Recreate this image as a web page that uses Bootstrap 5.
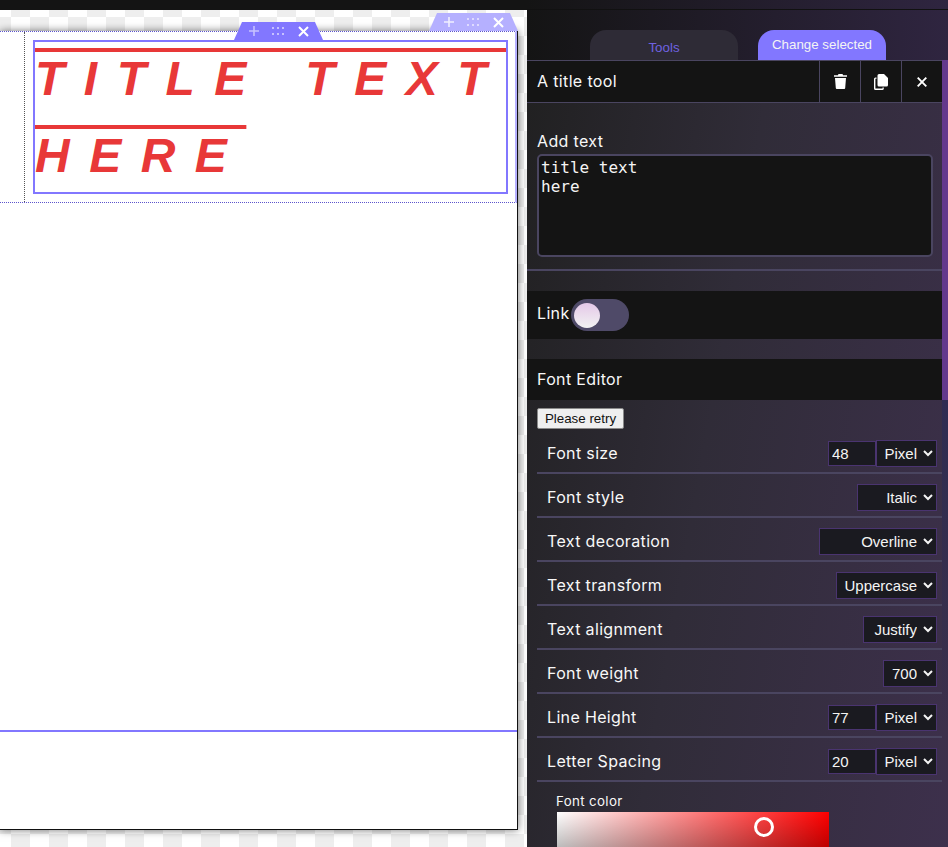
<!DOCTYPE html>
<html lang="en">
<head>
  <meta charset="UTF-8" />
  <meta name="viewport" content="width=device-width, initial-scale=1.0"/>
  <title>Page editor</title>
  <link href="https://cdn.jsdelivr.net/npm/bootstrap@5.3.3/dist/css/bootstrap.min.css" rel="stylesheet">
  <style>
    html, body { height: 847px; overflow: hidden; }
    body { background: #141414; font-family: "Inter", "Liberation Sans", sans-serif; font-weight: 400; color: #f8f8f8; letter-spacing: .35px; }
    .canvas-col {
      flex: 0 0 527px; height: 837px; margin-top: 10px; position: relative;
      background-color: #fff;
      background-image: conic-gradient(#eee 25%, #fff 0 50%, #eee 0 75%, #fff 0);
      background-size: 38px 38px;
      background-position: -8px -12px;
    }
    .page-sheet {
      width: 518px; height: 799px; margin-top: 21px; background: #fff;
      border-right: 1px solid #111; border-bottom: 1px solid #111; box-shadow: 0 0 8px rgba(0,0,0,.55);
    }
    .sel-section { height: 172px; border: 1px dotted #5d55cc; border-left: 0; border-right: 2px solid #b5b0ff; }
    .guide-col { flex: 0 0 25px; border-right: 1px dotted #555; }
    .title-box { margin: 8px 7px 0 8px; height: 154px; padding: 0 2px; box-shadow: inset 0 0 0 2px #8277ff; }
    .title-text {
      margin: 0; font: italic 700 48px/77px "Liberation Sans", sans-serif; color: #e83838;
      letter-spacing: 19.5px; text-transform: uppercase; text-decoration: overline; text-align: justify;
    }
    .drop-line { height: 2px; background: #8277ff; margin-top: 527px; }
    .handle {
      position: absolute; height: 18px; width: 89px; background: #8277ff; color: #fff; gap: 13px;
      clip-path: polygon(8px 0, calc(100% - 8px) 0, 100% 100%, 0 100%);
    }
    .handle-front { left: 234px; top: 12px; }
    .handle-back { left: 429px; top: 3px; background: #b5b0ff; }
    .panel-col {
      flex: 0 0 421px; height: 847px;
      background: linear-gradient(100deg, #202020 0%, #302c38 45%, #3d304c 100%);
    }
    .top-zone { background: linear-gradient(90deg, #141414, #2f2540); }
    .top-line { height: 10px; border-bottom: 1px solid #111; }
    .tab-row { height: 50px; padding: 20px 0 0 63px; gap: 20px; }
    .tab-item { height: 30px; border-radius: 16px 16px 0 0; font: 13.33px/1 "Liberation Sans", sans-serif; letter-spacing: 0; }
    .tab-off { width: 148px; background: #2e2b36; color: #6e62e0; padding-top: 11px; }
    .tab-on { width: 128px; background: #8277ff; color: #f4f4f4; padding-top: 8px; }
    .scroll-thumb { height: 340px; background: #63388c; }
    .scroll-rest { flex: 1 1 auto; background: linear-gradient(#2f2c52, rgba(47,44,82,0) 60%); }
    .scroll-rail { flex: 0 0 6px; }
    .main-col { width: 415px; flex: 0 0 415px; }
    .head-bar { height: 43px; background: #141414; border-top: 1px solid #4a4560; border-bottom: 1px solid #4a4560; padding-left: 10px; }
    .head-btn { width: 41px; height: 41px; border-left: 1px solid #4a4560; }
    .head-title { font-size: 16px; padding-bottom: 2px; }
    .add-label { margin-top: 27px; height: 22px; padding-left: 10px; font-size: 16px; line-height: 22px; }
    .text-entry {
      display: block; width: 396px; height: 103px; margin: 2px 0 0 10px; resize: none; padding: 2px;
      background: #141414; color: #f4f4f4; border: 2px solid #4a4560; border-radius: 5px;
      font: 16px/19px "DejaVu Sans Mono", monospace; letter-spacing: 0; outline: 0;
    }
    .rule-thick { height: 2px; background: #4a4560; margin-top: 12px; }
    .dark-band { background: #141414; padding-left: 10px; font-size: 16px; }
    .link-band { height: 48px; margin-top: 20px; }
    .link-band span { padding-bottom: 4px; }
    .font-band { height: 41px; margin-top: 20px; padding-bottom: 2px; }
    .toggle-track { width: 58px; height: 32px; border-radius: 16px; background: #4f4a68; padding-left: 3px; margin-left: 1px; }
    .toggle-knob { width: 26px; height: 25px; border-radius: 50%; background: linear-gradient(#e4c8e8, #f2f2f2); }
    .retry-btn {
      display: block; margin: 8px 0 1px 10px; width: 87px; height: 21px; padding: 0; background: #efefef; color: #111;
      border: 1px solid #8a8a8a; border-radius: 2px; font: 13.33px "Liberation Sans", sans-serif; letter-spacing: 0;
    }
    .prop-row { height: 44px; margin-left: 10px; padding: 4px 5px 0 10px; border-bottom: 2px solid #4a4560; font-size: 16px; }
    .num-box, .unit-box {
      background: #1a1a20; color: #f4f4f4; border: 1px solid #4a3470; font: 15px "Liberation Sans", sans-serif; letter-spacing: 0; outline: 0; border-radius: 0;
    }
    .num-box { width: 48px; height: 25px; padding: 0 3px; }
    .unit-box { height: 27px; text-align: right; color-scheme: dark; padding-right: 3px; }
    .unit-pixel { width: 61px; }
    .unit-italic { width: 80px; }
    .unit-overline { width: 118px; }
    .unit-upper { width: 101px; }
    .unit-justify { width: 74px; }
    .unit-weight { width: 54px; }
    .color-label { font-size: 13.33px; margin: 11px 0 0 29px; line-height: 16px; }
    .color-field {
      width: 272px; height: 136px; margin: 3px 0 0 30px; position: relative;
      background: linear-gradient(to top, #000, transparent), linear-gradient(to right, #fff, #f00);
    }
    .color-dot { position: absolute; left: 197px; top: 5px; width: 20px; height: 20px; border: 3px solid #fff; border-radius: 50%; }
  </style>
</head>
<body class="d-flex">
  <div class="canvas-col">
    <div class="page-sheet">
      <div class="sel-section d-flex">
        <div class="guide-col"></div>
        <div class="title-box flex-grow-1">
          <h1 class="title-text">title text here</h1>
        </div>
      </div>
      <div class="drop-line"></div>
    </div>
    <div class="handle handle-back d-flex align-items-center justify-content-center">
      <svg width="10" height="10" viewBox="0 0 10 10" stroke="#fff" stroke-opacity=".8" stroke-width="1.6"><path d="M5 0v10M0 5h10"/></svg>
      <svg width="13" height="9" viewBox="0 0 13 9" fill="#fff" opacity=".55"><path d="M0 0h2v2H0zM5 0h2v2H5zM10 0h2v2h-2zM0 6h2v2H0zM5 6h2v2H5zM10 6h2v2h-2z"/></svg>
      <svg width="11" height="11" viewBox="0 0 11 11" stroke="#fff" stroke-width="2"><path d="M1 1l9 9M10 1l-9 9"/></svg>
    </div>
    <div class="handle handle-front d-flex align-items-center justify-content-center">
      <svg width="10" height="10" viewBox="0 0 10 10" stroke="#fff" stroke-opacity=".55" stroke-width="1.6"><path d="M5 0v10M0 5h10"/></svg>
      <svg width="13" height="9" viewBox="0 0 13 9" fill="#fff" opacity=".55"><path d="M0 0h2v2H0zM5 0h2v2H5zM10 0h2v2h-2zM0 6h2v2H0zM5 6h2v2H5zM10 6h2v2h-2z"/></svg>
      <svg width="11" height="11" viewBox="0 0 11 11" stroke="#fff" stroke-width="2"><path d="M1 1l9 9M10 1l-9 9"/></svg>
    </div>
  </div>

  <div class="panel-col overflow-hidden">
    <div class="top-zone">
      <div class="top-line"></div>
      <div class="tab-row d-flex text-center">
        <div class="tab-item tab-off">Tools</div>
        <div class="tab-item tab-on">Change selected</div>
      </div>
    </div>
    <div class="d-flex">
      <div class="main-col">
        <div class="head-bar d-flex align-items-center">
          <div class="head-title flex-grow-1">A title tool</div>
          <div class="head-btn d-flex align-items-center justify-content-center">
            <svg width="13" height="15" viewBox="0 0 13 15" fill="#fff"><path d="M4.500 0h4l.6 1.200H13v1.600H0V1.200h3.900zM1 4h11l-.8 10a1 1 0 0 1-1 1H2.800a1 1 0 0 1-1-1z"/></svg>
          </div>
          <div class="head-btn d-flex align-items-center justify-content-center">
            <svg width="14" height="16" viewBox="0 0 14 16" fill="#fff"><path d="M5 0h5l4 4v7a1.500 1.500 0 0 1-1.500 1.500H5A1.500 1.500 0 0 1 3.500 11V1.500A1.500 1.500 0 0 1 5 0z"/><path d="M2.500 3.500v1.300H1.400v9.800h7.100v-1h1.300v.9A1.500 1.500 0 0 1 8.300 16H1.500A1.500 1.500 0 0 1 0 14.500V5a1.500 1.500 0 0 1 1.500-1.500z"/></svg>
          </div>
          <div class="head-btn d-flex align-items-center justify-content-center">
            <svg width="10" height="10" viewBox="0 0 10 10" stroke="#fff" stroke-width="1.900"><path d="M.7.7l8.600 8.600M9.300.7L.7 9.300"/></svg>
          </div>
        </div>

        <div class="add-label">Add text</div>
        <textarea class="text-entry" spellcheck="false">title text
here</textarea>
        <div class="rule-thick"></div>

        <div class="dark-band link-band d-flex align-items-center">
          <span>Link</span>
          <div class="toggle-track d-flex align-items-center"><div class="toggle-knob"></div></div>
        </div>

        <div class="dark-band font-band d-flex align-items-center">Font Editor</div>
        <button class="retry-btn" type="button">Please retry</button>

        <div class="prop-row d-flex align-items-center">
          <span class="flex-grow-1">Font size</span>
          <input class="num-box" value="48">
          <select class="unit-box unit-pixel"><option>Pixel</option></select>
        </div>
        <div class="prop-row d-flex align-items-center">
          <span class="flex-grow-1">Font style</span>
          <select class="unit-box unit-italic"><option>Italic</option></select>
        </div>
        <div class="prop-row d-flex align-items-center">
          <span class="flex-grow-1">Text decoration</span>
          <select class="unit-box unit-overline"><option>Overline</option></select>
        </div>
        <div class="prop-row d-flex align-items-center">
          <span class="flex-grow-1">Text transform</span>
          <select class="unit-box unit-upper"><option>Uppercase</option></select>
        </div>
        <div class="prop-row d-flex align-items-center">
          <span class="flex-grow-1">Text alignment</span>
          <select class="unit-box unit-justify"><option>Justify</option></select>
        </div>
        <div class="prop-row d-flex align-items-center">
          <span class="flex-grow-1">Font weight</span>
          <select class="unit-box unit-weight"><option>700</option></select>
        </div>
        <div class="prop-row d-flex align-items-center">
          <span class="flex-grow-1">Line Height</span>
          <input class="num-box" value="77">
          <select class="unit-box unit-pixel"><option>Pixel</option></select>
        </div>
        <div class="prop-row d-flex align-items-center">
          <span class="flex-grow-1">Letter Spacing</span>
          <input class="num-box" value="20">
          <select class="unit-box unit-pixel"><option>Pixel</option></select>
        </div>

        <div class="color-label">Font color</div>
        <div class="color-field"><div class="color-dot"></div></div>
      </div>
      <div class="scroll-rail d-flex flex-column">
        <div class="scroll-thumb"></div>
        <div class="scroll-rest"></div>
      </div>
    </div>
  </div>
</body>
</html>
